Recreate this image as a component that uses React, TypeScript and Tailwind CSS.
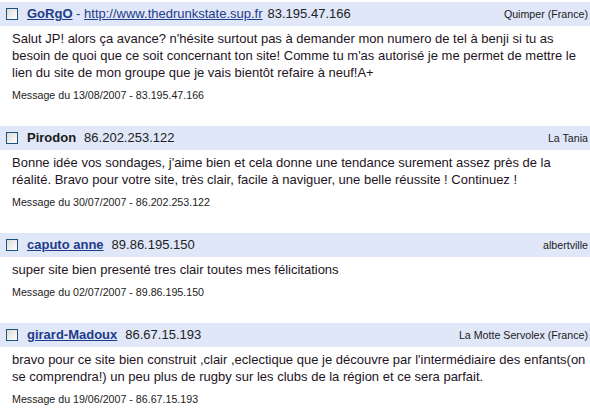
import React from "react";

type Entry = {
    name: string;
    linked: boolean;
    site?: string;
    ip: string;
    place: string;
    text: string;
    date: string;
};

const entries: Entry[] = [
    {
        name: "GoRgO",
        linked: true,
        site: "http://www.thedrunkstate.sup.fr",
        ip: "83.195.47.166",
        place: "Quimper (France)",
        text: "Salut JP! alors ça avance? n'hésite surtout pas à demander mon numero de tel à benji si tu as besoin de quoi que ce soit concernant ton site! Comme tu m'as autorisé je me permet de mettre le lien du site de mon groupe que je vais bientôt refaire à neuf!A+",
        date: "13/08/2007"
    },
    {
        name: "Pirodon",
        linked: false,
        ip: "86.202.253.122",
        place: "La Tania",
        text: "Bonne idée vos sondages, j'aime bien et cela donne une tendance surement assez près de la réalité. Bravo pour votre site, très clair, facile à naviguer, une belle réussite ! Continuez !",
        date: "30/07/2007"
    },
    {
        name: "caputo anne",
        linked: true,
        ip: "89.86.195.150",
        place: "albertville",
        text: "super site bien presenté tres clair toutes mes félicitations",
        date: "02/07/2007"
    },
    {
        name: "girard-Madoux",
        linked: true,
        ip: "86.67.15.193",
        place: "La Motte Servolex (France)",
        text: "bravo pour ce site bien construit ,clair ,eclectique que je découvre par l'intermédiaire des enfants(on se comprendra!) un peu plus de rugby sur les clubs de la région et ce sera parfait.",
        date: "19/06/2007"
    }
];

function Checkbox() {
    return (
        <span className="inline-block w-[12px] h-[12px] shrink-0 border border-[#1c5180] bg-gradient-to-br from-[#dcdcd7] to-white" />
    );
}

function GuestEntry({ entry }: { entry: Entry }) {
    return (
        <div className="flex flex-col">
            <div className="flex items-center h-[24px] bg-[#dfe7f8] pl-[6px] pr-[2px]">
                <Checkbox />
                <span className="ml-[9px] text-[13px] text-[#222]">
                    {entry.linked ? (
                        <a href="#" className="font-bold underline text-[#1f3c88]">
                            {entry.name}
                        </a>
                    ) : (
                        <span className="font-bold text-[#1a1a1a]">{entry.name}</span>
                    )}
                    {entry.site && (
                        <>
                            <span className="text-[#1f3c88]"> - </span>
                            <a href="#" className="underline text-[#1f3c88]">
                                {entry.site}
                            </a>
                        </>
                    )}
                    <span className={entry.site ? "ml-[5px]" : "ml-[8px]"}>{entry.ip}</span>
                </span>
                <span className="ml-auto text-[10.67px] text-[#222]">{entry.place}</span>
            </div>

            <div className="pl-[12px] pr-[4px] pt-[4px] pb-[24px]">
                <p className="text-[13px] leading-[17px] text-[#1e1424]">
                    {entry.text}
                </p>
                <p className="mt-[8px] text-[10.67px] leading-[13px] text-[#222]">
                    Message du {entry.date} - {entry.ip}
                </p>
            </div>
        </div>
    );
}

export default function App() {
    return (
        <div
            className="w-[590px] h-[409px] overflow-hidden bg-white pt-[2px]"
            style={{ fontFamily: '"Liberation Sans", Arial, sans-serif' }}
        >
            {entries.map(e => (
                <GuestEntry key={e.name} entry={e} />
            ))}
        </div>
    );
}
